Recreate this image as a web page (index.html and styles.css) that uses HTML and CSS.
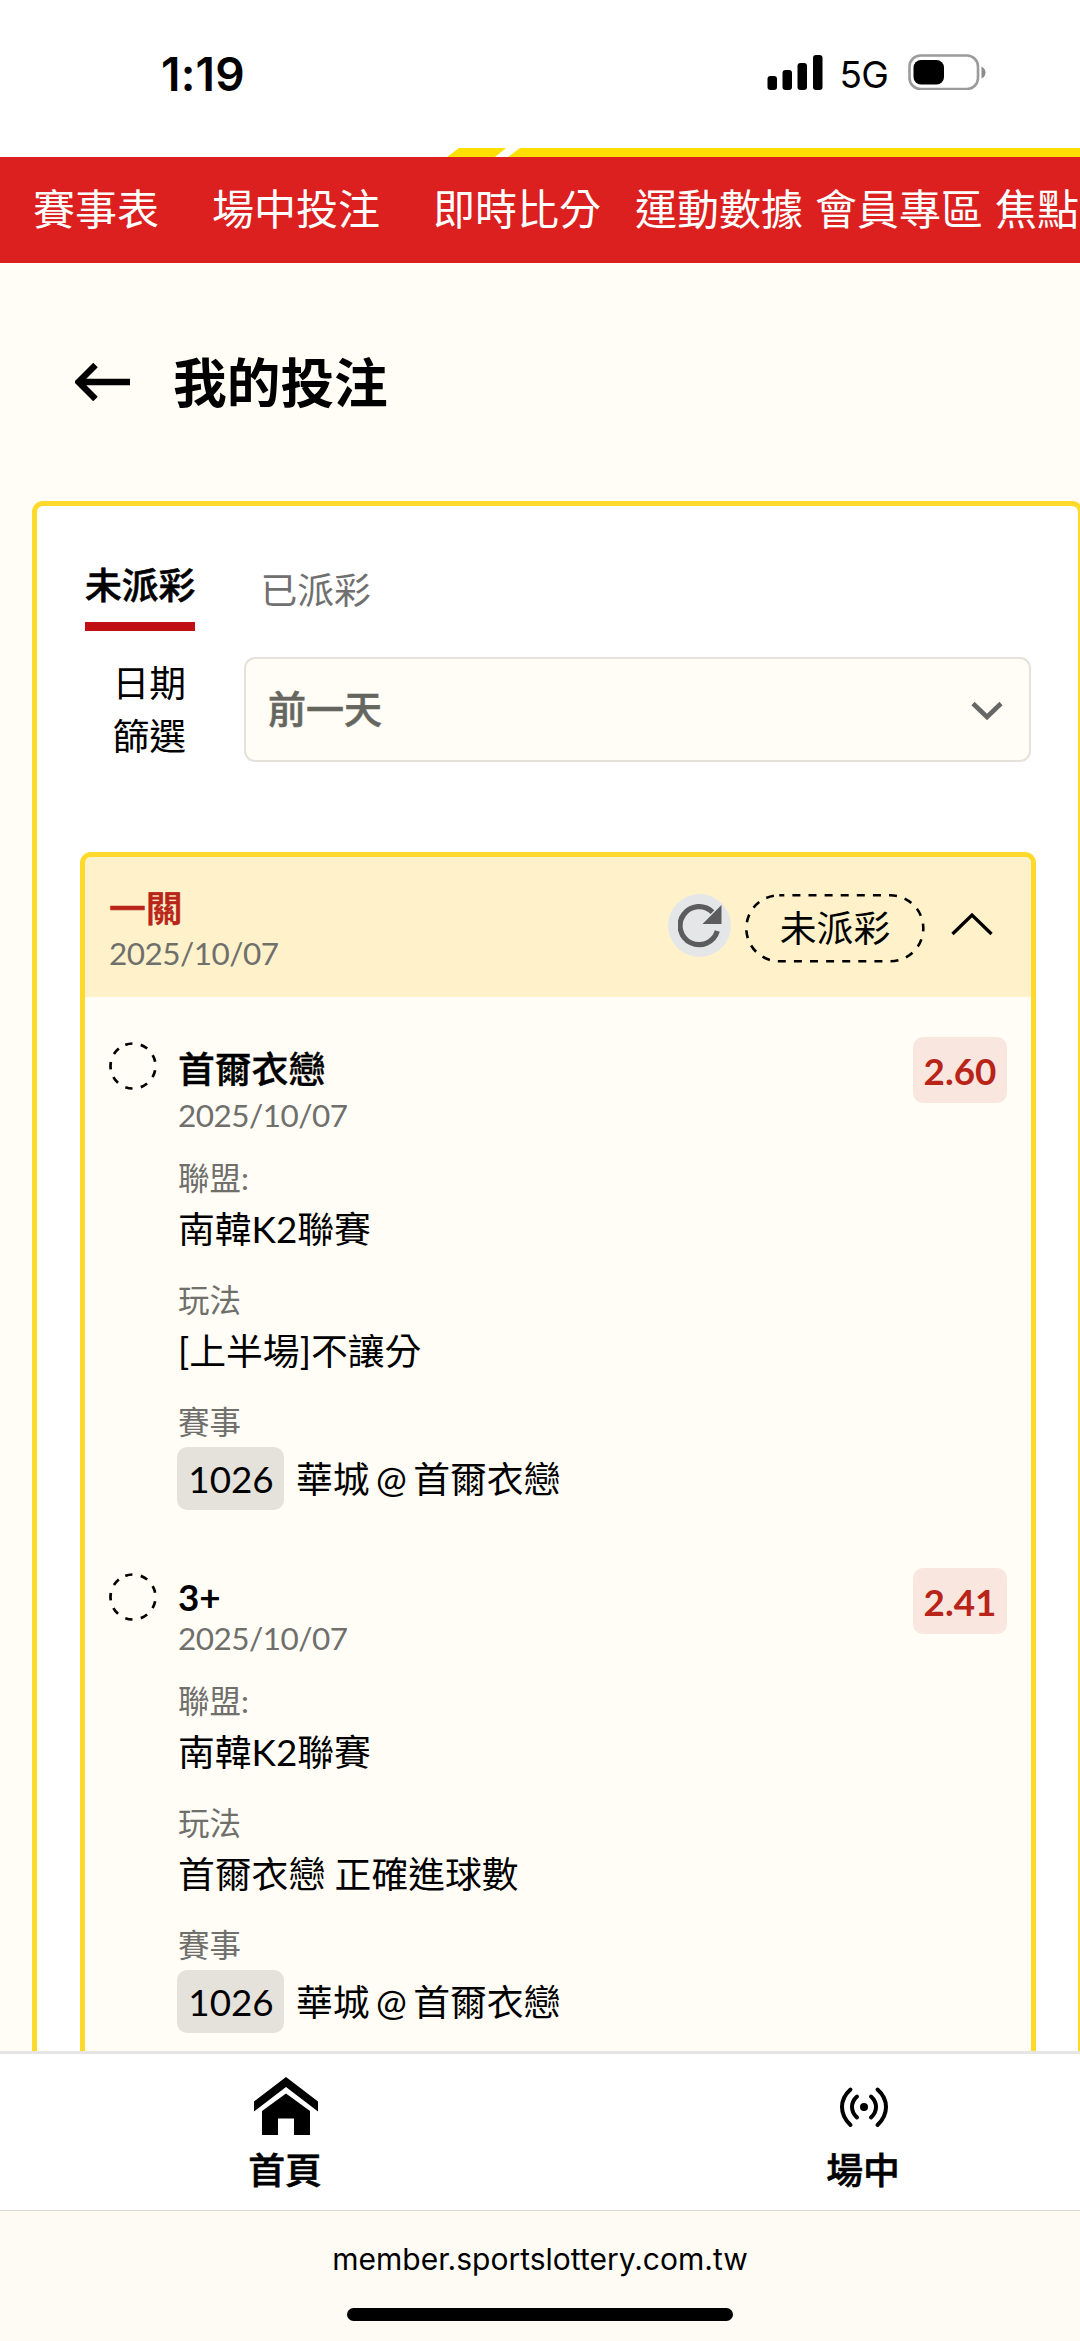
FILE: index.html
```html
<!DOCTYPE html>
<html lang="zh-Hant">
<head>
<meta charset="utf-8">
<title>我的投注</title>
<link rel="stylesheet" href="styles.css">
</head>
<body>
<div class="screen">
  <header class="status">
    <span class="time">1:19</span>
    <div class="indicators">
      <svg class="signal" width="56" height="36" viewBox="0 0 56 36"><rect x="0.5" y="21" width="9.5" height="14" rx="3"/><rect x="15.5" y="15" width="9.5" height="20" rx="3"/><rect x="30.5" y="8" width="9.5" height="27" rx="3"/><rect x="46" y="0" width="9.5" height="35" rx="3"/></svg>
      <span class="network">5G</span>
      <svg class="battery" width="78" height="36" viewBox="0 0 78 36"><rect x="1.5" y="1.5" width="68.5" height="33.5" rx="11" fill="none" stroke="#9b9b9b" stroke-width="2.6"/><rect x="5.5" y="6" width="30.5" height="24.5" rx="7.5"/><path d="M73.500 12.500v12q4-2 4-6t-4-6z" fill="#8c8c8c"/></svg>
    </div>
  </header>
  <svg class="stripe" width="1080" height="9" viewBox="0 0 1080 9"><path d="M459 0h47l-11 9h-48zM520 0h560v9H508z" fill="#ffdf00"/></svg>
  <nav class="topnav">
    <span class="wide">賽事表</span><span class="wide">場中投注</span><span class="mid">即時比分</span><span>運動數據</span><span>會員專區</span><span>焦點新聞</span>
  </nav>

  <main class="page">
    <div class="heading">
      <svg width="56" height="38" viewBox="0 0 56 38"><path d="M2 19h53M20.500 2L3.500 19l17 17" fill="none" stroke="#000" stroke-width="6.400"/></svg>
      <h1>我的投注</h1>
    </div>
    <section class="panel">
      <div class="tabs"><span class="tab active">未派彩</span><span class="tab">已派彩</span></div>
      <div class="filter">
        <div class="filter-label">日期<br>篩選</div>
        <div class="select"><span>前一天</span>
          <svg width="32" height="20" viewBox="0 0 32 20"><path d="M2 2.500l14 13.500L30 2.500" fill="none" stroke="#666" stroke-width="4.600"/></svg>
        </div>
      </div>
      <article class="ticket">
        <div class="ticket-head">
          <div class="ticket-name"><strong>一關</strong><span class="date">2025/10/07</span></div>
          <div class="refresh"><svg width="44" height="44" viewBox="0 0 44 44"><path d="M39.300 27A19 19 0 1 1 34.500 8.200" fill="none" stroke="#5c5c5e" stroke-width="5.200"/><path d="M43.500 1v19h-19z" fill="#5c5c5e"/></svg></div>
          <div class="pill"><svg width="180" height="69" viewBox="0 0 180 69"><rect x="1.300" y="1.300" width="177" height="66" rx="33" fill="none" stroke="#000" stroke-width="2.600" stroke-dasharray="8 8.100" stroke-dashoffset="3"/></svg><span>未派彩</span></div>
          <svg class="collapse" width="42" height="24" viewBox="0 0 42 24"><path d="M1.500 22L21 3l19.500 19" fill="none" stroke="#000" stroke-width="3.400"/></svg>
        </div>

        <div class="bet first">
          <svg class="ring" width="48" height="48" viewBox="0 0 48 48"><circle cx="24" cy="24" r="22.500" fill="none" stroke="#000" stroke-width="2.700" stroke-dasharray="7.300 8.408" transform="rotate(-110 24 24)"/></svg>
          <div class="bet-body">
            <div class="bet-title">首爾衣戀</div>
            <div class="date">2025/10/07</div>
            <div class="key">聯盟:</div><div class="value">南韓K2聯賽</div>
            <div class="key">玩法</div><div class="value">[上半場]不讓分</div>
            <div class="key">賽事</div>
            <div class="match"><span class="code">1026</span><span>華城 @ 首爾衣戀</span></div>
          </div>
          <div class="odds">2.60</div>
        </div>

        <div class="bet">
          <svg class="ring" width="48" height="48" viewBox="0 0 48 48"><circle cx="24" cy="24" r="22.500" fill="none" stroke="#000" stroke-width="2.700" stroke-dasharray="7.300 8.408" transform="rotate(-110 24 24)"/></svg>
          <div class="bet-body">
            <div class="bet-title short">3+</div>
            <div class="date">2025/10/07</div>
            <div class="key">聯盟:</div><div class="value">南韓K2聯賽</div>
            <div class="key">玩法</div><div class="value">首爾衣戀 正確進球數</div>
            <div class="key">賽事</div>
            <div class="match"><span class="code">1026</span><span>華城 @ 首爾衣戀</span></div>
          </div>
          <div class="odds">2.41</div>
        </div>
      </article>
    </section>
  </main>

  <nav class="bottomnav">
    <div class="dest home">
      <svg width="64" height="58" viewBox="0 0 64 58"><path d="M32 0L0 24.500v10L32 10l32 24.500v-10z"/><path d="M32 16.500L8 34v24h16V41.500h16V58h16V34z"/></svg>
      <span>首頁</span>
    </div>
    <div class="dest live">
      <svg width="64" height="58" viewBox="0 0 64 58"><g fill="none" stroke="#000" stroke-width="4" stroke-linecap="round"><path d="M18.500 12.500Q10 20 10 30t8.500 18M45.500 12.500Q54 20 54 30t-8.500 18M25 19.500Q20 24 20 30t5 10.500M39 19.500Q44 24 44 30t-5 10.500"/></g><circle cx="32" cy="30" r="4"/></svg>
      <span>場中</span>
    </div>
  </nav>
  <footer class="browser">
    <span class="url">member.sportslottery.com.tw</span>
    <div class="homebar"></div>
  </footer>
</div>
</body>
</html>
```
FILE: styles.css
```css
* { box-sizing: border-box; }
body { margin: 0; background: #fff; color: #000; font-family: Lato, "Noto Sans CJK TC", sans-serif; font-size: 36.8px; font-weight: 400; }
svg { display: block; flex: none; }
.screen { width: 1080px; height: 2341px; overflow: hidden; display: flex; flex-direction: column; }

.status { height: 148px; flex: none; display: flex; justify-content: space-between; align-items: flex-start; padding: 54px 94px 0 161px; font-family: Inter, sans-serif; }
.time { font-size: 46px; line-height: 40px; font-weight: 600; letter-spacing: 0.2px; }
.indicators { display: flex; gap: 19px; align-items: flex-start; }
.signal { margin-top: 1px; }
.network { font-size: 37px; line-height: 42px; letter-spacing: -0.8px; margin: 0 1px 0 -2px; }
.stripe { flex: none; }

.topnav { flex: none; height: 106px; background: #dc1f1f; color: #fff; display: flex; padding-left: 33px; gap: 12px; font-size: 42px; line-height: 104px; white-space: nowrap; }
.topnav span { flex: none; }
.topnav .wide { margin-right: 41px; }
.topnav .mid { margin-right: 22px; }

.page { flex: none; height: 1788px; overflow: hidden; background: #fffdf6; }
.heading { height: 238px; padding: 0 0 0 75px; display: flex; align-items: center; gap: 42px; }
h1 { margin: 0; font-size: 53.7px; line-height: 80px; font-weight: 600; }

.panel { width: 1051px; height: 1700px; margin-left: 32px; border: 5.4px solid #ffd92b; border-radius: 11px; background: #fff; padding: 49px 42px 0 43px; }
.tabs { display: flex; gap: 65px; margin-left: 5px; height: 76px; }
.tab { color: #707070; line-height: 70px; height: 76px; }
.tab.active { color: #000; font-weight: 500; line-height: 61px; border-bottom: 9px solid #c01014; }
.tab.active, .select span, .ticket-name strong, .dest span { -webkit-text-stroke: 0.6px currentColor; }
.filter { display: flex; margin-top: 26px; height: 105px; }
.filter-label { width: 106px; height: 105px; line-height: 53px; text-align: right; }
.select { width: 787px; margin-left: 58px; border: 2px solid #e5e2dc; border-radius: 11px; background: #fffdf6; display: flex; align-items: center; justify-content: space-between; padding: 0 26px 0 22px; color: #666660; font-size: 38px; font-weight: 500; }
.select span { line-height: 54px; margin-top: -3px; }
.select svg { margin-top: 2px; }

.ticket { width: 956px; height: 1400px; margin-top: 90px; border: 5.4px solid #ffd92b; border-radius: 11px; background: #fffdf6; overflow: hidden; }
.ticket-head { height: 140px; background: #fff2cb; display: flex; padding: 0 38px 0 24px; }
.ticket-name { flex: 1; padding-top: 26px; }
.ticket-name strong { display: block; color: #b92418; line-height: 50px; height: 50px; font-weight: 500; }
.date { display: block; color: #6f6f6c; font-size: 31.5px; line-height: 40px; height: 40px; letter-spacing: -0.5px; }
.refresh { width: 63px; height: 63px; border-radius: 50%; background: #e5e6e8; margin: 37px 0 0; display: flex; align-items: center; justify-content: center; }
.pill { width: 180px; height: 69px; margin: 37px 26px 0 14px; display: grid; line-height: 68px; text-align: center; }
.pill > * { grid-area: 1 / 1; }
.collapse { margin-top: 55px; }

.bet { display: flex; height: 531px; padding: 45px 24px 0 24px; }
.bet-body { flex: 1; margin-left: 21px; }
.bet-title { font-weight: 500; line-height: 54px; height: 53px; -webkit-text-stroke: 0.4px currentColor; }
.bet-title.short { height: 45px; line-height: 48px; font-weight: 700; -webkit-text-stroke: 0; }
.key { color: #6f6f6c; font-size: 31.5px; line-height: 44px; height: 46px; margin-top: 22px; }
.date + .key { margin-top: 21px; }
.value { line-height: 55px; height: 54px; }
.match { display: flex; align-items: center; height: 63px; line-height: 62px; gap: 12px; margin-top: 1px; word-spacing: -3px; }
.code { width: 107px; height: 63px; margin-left: -1px; border-radius: 10px; background: #e5e2dc; text-align: center; padding-left: 1px; line-height: 64px; }
.odds { width: 94px; height: 66px; margin-top: -5px; border-radius: 10px; background: #f8e6df; color: #b92418; font-weight: 700; line-height: 68px; text-align: center; }

.bottomnav { flex: none; height: 160px; background: #fff; border-top: 3px solid #e5e5e5; border-bottom: 1px solid #d8d8d4; display: flex; }
.dest { width: 110px; display: flex; flex-direction: column; align-items: center; padding-top: 23px; font-weight: 500; line-height: 54px; gap: 8px; }
.dest span { margin-left: -2px; }
.home { margin-left: 231px; }
.live { margin-left: 468px; }
.browser { flex: none; height: 130px; background: #fdfbf4; display: flex; flex-direction: column; align-items: center; padding-top: 28px; font-family: Inter, sans-serif; font-size: 30px; }
.url { line-height: 40px; letter-spacing: 0; }
.homebar { width: 386px; height: 13px; border-radius: 7px; background: #000; margin-top: 29px; }
```
